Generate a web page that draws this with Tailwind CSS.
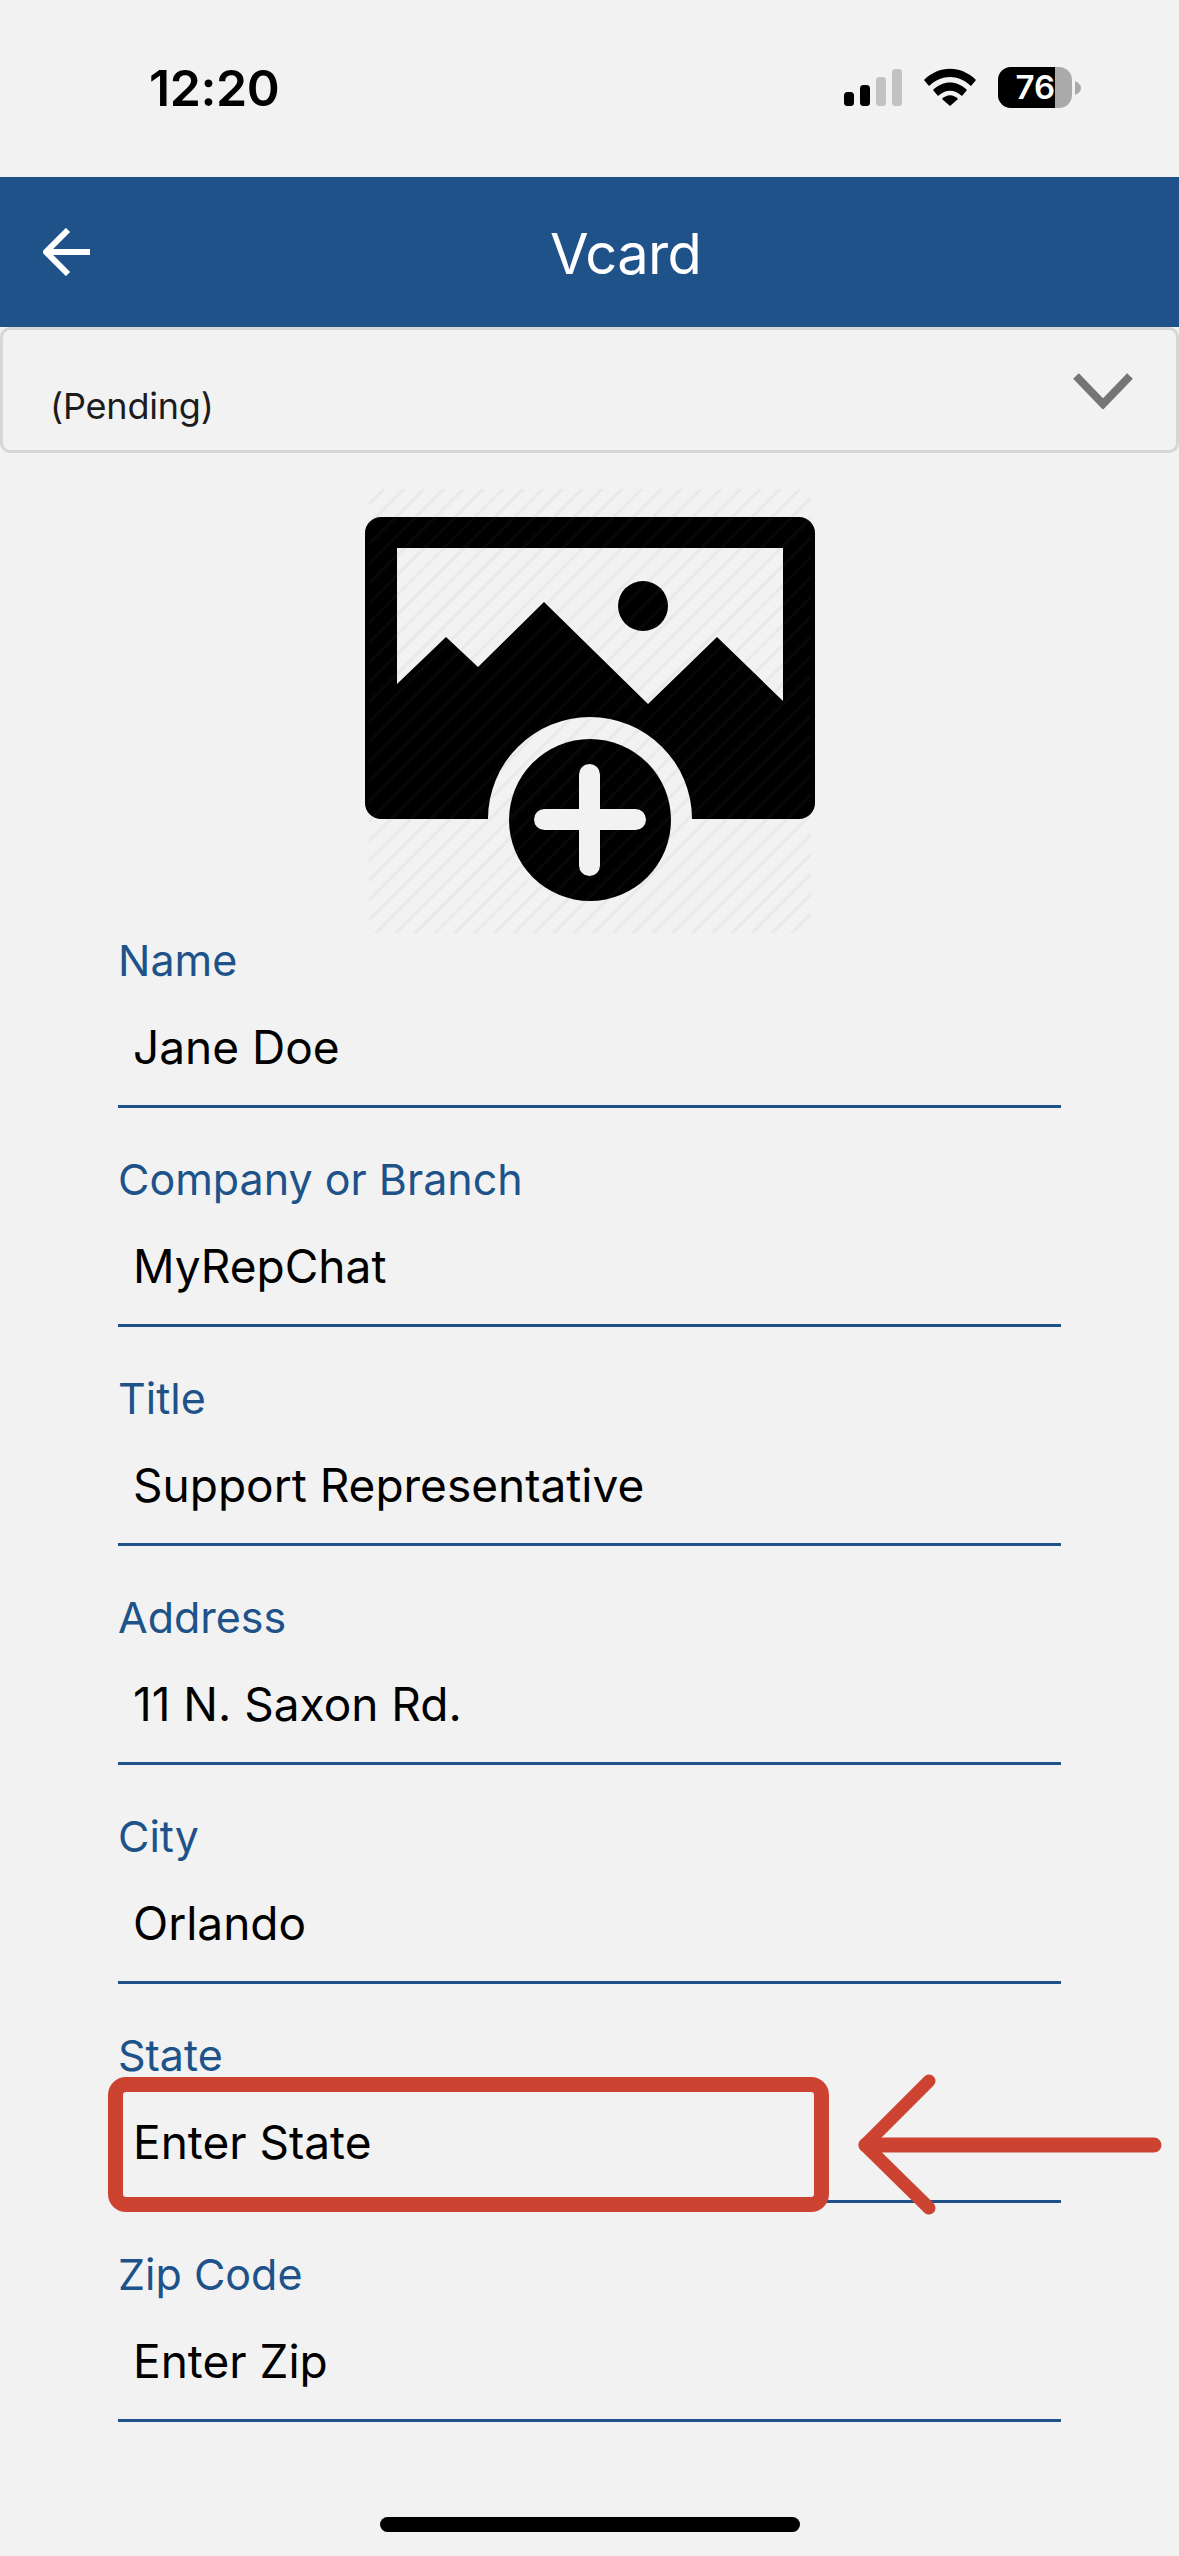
<!DOCTYPE html>
<html>
<head>
<meta charset="utf-8">
<script src="https://cdn.jsdelivr.net/npm/@tailwindcss/browser@4"></script>
<title>Vcard</title>
</head>
<body class="bg-[#f2f2f2]">
<div class="relative w-[1179px] h-[2556px] overflow-hidden bg-[#f2f2f2] font-['Inter','Liberation_Sans',sans-serif]">

  <!-- Status bar -->
  <div class="h-[177px] flex items-start pl-[149px] pr-[98px] pt-[60px] justify-between">
    <span class="text-[50px] leading-[56px] font-semibold text-black tracking-[-0.4px]">12:20</span>
    <div class="flex items-start gap-[22px] pt-[7px]">
      <svg class="w-[58px] h-[37px] mt-[2px]" viewBox="0 0 58 37">
        <rect x="0" y="23" width="10" height="14" rx="3.5" fill="#000"/>
        <rect x="16" y="16" width="10" height="21" rx="3.5" fill="#000"/>
        <rect x="32" y="8" width="10" height="29" rx="3.5" fill="#c2c2c2"/>
        <rect x="48" y="0" width="10" height="37" rx="3.5" fill="#c2c2c2"/>
      </svg>
      <svg class="w-[52px] h-[38px] mt-[1px]" viewBox="0 0 52 38">
        <path d="M0 12 C15 -3 37 -3 52 12 L47 18 C34 6 18 6 5 18 Z" fill="#000"/>
        <path d="M9 22 C19 12 33 12 43 22 L38 28 C30 21 22 21 14 28 Z" fill="#000"/>
        <path d="M18 31 C23 26 29 26 34 31 L26 38 Z" fill="#000"/>
      </svg>
      <div class="relative flex items-center">
        <div class="relative w-[74px] h-[41px] rounded-[13px] overflow-hidden bg-[#aaaaaa]">
          <div class="w-[57px] h-full bg-black flex items-center justify-end">
            <span class="text-white text-[33px] leading-none font-semibold">76</span>
          </div>
        </div>
        <svg class="w-[6px] h-[14px] ml-[3px]" viewBox="0 0 6 14"><path d="M0 0 C4 2 6 4 6 7 C6 10 4 12 0 14 Z" fill="#aaaaaa"/></svg>
      </div>
    </div>
  </div>

  <!-- Header -->
  <header class="h-[150px] bg-[#20528a] flex items-center relative">
    <svg class="ml-[43px] w-[48px] h-[48px]" viewBox="0 0 48 48" fill="none" stroke="#fff" stroke-width="6">
      <path d="M47 24 H3"/>
      <path d="M25 2 L3 24 L25 46"/>
    </svg>
    <span class="ml-[459px] mt-[3px] text-[56px] leading-none text-white font-normal tracking-[-0.6px]">Vcard</span>
  </header>

  <!-- Status select -->
  <div class="h-[126px] border-[3px] border-[#d6d6d6] rounded-[10px] flex justify-between pl-[47px] pr-[43px]">
    <span class="mt-[55px] text-[36px] leading-[42px] text-[#1c1c1c] tracking-[-0.2px]">(Pending)</span>
    <svg class="mt-[43px] w-[60px] h-[36px]" viewBox="0 0 60 36" fill="none" stroke="#757575" stroke-width="8"><path d="M3 3 L30 31 L57 3"/></svg>
  </div>

  <!-- Photo picker -->
  <svg class="block mt-[34px] mx-auto w-[450px] h-[450px]" viewBox="365 487 450 450">
    <defs>
      <pattern id="hatch" width="14" height="14" patternUnits="userSpaceOnUse" patternTransform="rotate(-45)">
        <rect x="0" y="0" width="14" height="3" fill="#e8e8e8"/>
      </pattern>
      <pattern id="sheen" width="14" height="14" patternUnits="userSpaceOnUse" patternTransform="rotate(-45)">
        <rect x="0" y="0" width="14" height="3" fill="#ffffff" fill-opacity="0.03"/>
      </pattern>
    </defs>
    <rect x="369" y="489" width="442" height="444" fill="url(#hatch)"/>
    <path fill="#000" fill-rule="evenodd" d="M381 517 H799 A16 16 0 0 1 815 533 V803 A16 16 0 0 1 799 819 H692 A102 102 0 0 0 488 819 H381 A16 16 0 0 1 365 803 V533 A16 16 0 0 1 381 517 Z M397 548 V684 L446 637 L478 667 L544 602 L648 704 L717 637 L783 701 V548 Z"/>
    <circle cx="643" cy="606" r="25" fill="#000"/>
    <circle cx="590" cy="820" r="81" fill="#000"/>
    <rect x="579" y="764" width="21" height="112" rx="10.5" fill="#f2f2f2"/>
    <rect x="534" y="809" width="112" height="21" rx="10.5" fill="#f2f2f2"/>
    <rect x="369" y="489" width="442" height="444" fill="url(#sheen)"/>
  </svg>

  <!-- Contact fields -->
  <form class="ml-[118px] w-[943px] flex flex-col gap-[48px]">
    <div class="border-b-[3px] border-[#20528a]">
      <div class="h-[50px] text-[43px] leading-[47px] text-[#20528a]">Name</div>
      <div class="mt-[35px] mb-[33px] pl-[15px] h-[50px] text-[46px] leading-[50px] text-black">Jane Doe</div>
    </div>
    <div class="border-b-[3px] border-[#20528a]">
      <div class="h-[50px] text-[43px] leading-[47px] text-[#20528a]">Company or Branch</div>
      <div class="mt-[35px] mb-[33px] pl-[15px] h-[50px] text-[46px] leading-[50px] text-black">MyRepChat</div>
    </div>
    <div class="border-b-[3px] border-[#20528a]">
      <div class="h-[50px] text-[43px] leading-[47px] text-[#20528a]">Title</div>
      <div class="mt-[35px] mb-[33px] pl-[15px] h-[50px] text-[46px] leading-[50px] text-black">Support Representative</div>
    </div>
    <div class="border-b-[3px] border-[#20528a]">
      <div class="h-[50px] text-[43px] leading-[47px] text-[#20528a]">Address</div>
      <div class="mt-[35px] mb-[33px] pl-[15px] h-[50px] text-[46px] leading-[50px] text-black">11 N. Saxon Rd.</div>
    </div>
    <div class="border-b-[3px] border-[#20528a]">
      <div class="h-[50px] text-[43px] leading-[47px] text-[#20528a]">City</div>
      <div class="mt-[35px] mb-[33px] pl-[15px] h-[50px] text-[46px] leading-[50px] text-black">Orlando</div>
    </div>
    <div class="border-b-[3px] border-[#20528a]">
      <div class="h-[50px] text-[43px] leading-[47px] text-[#20528a]">State</div>
      <div class="mt-[35px] mb-[33px] pl-[15px] h-[50px] text-[46px] leading-[50px] text-black">Enter State</div>
    </div>
    <div class="border-b-[3px] border-[#20528a]">
      <div class="h-[50px] text-[43px] leading-[47px] text-[#20528a]">Zip Code</div>
      <div class="mt-[35px] mb-[33px] pl-[15px] h-[50px] text-[46px] leading-[50px] text-black">Enter Zip</div>
    </div>
  </form>

  <!-- Callout box and arrow around the State field -->
  <div class="absolute left-[108px] top-[2077px] w-[721px] h-[135px] border-[15px] border-[#cc4331] rounded-[18px]"></div>
  <svg class="absolute left-[850px] top-[2068px] w-[320px] h-[154px]" viewBox="850 2068 320 154" fill="none" stroke="#cc4331" stroke-linecap="round" stroke-linejoin="round">
    <path stroke-width="13" d="M929 2081 L865 2145 L929 2208"/>
    <path stroke-width="15" d="M866 2145 H1154"/>
  </svg>

  <!-- Home indicator -->
  <div class="absolute left-[380px] top-[2517px] w-[420px] h-[15px] rounded-full bg-black"></div>
</div>
</body>
</html>
